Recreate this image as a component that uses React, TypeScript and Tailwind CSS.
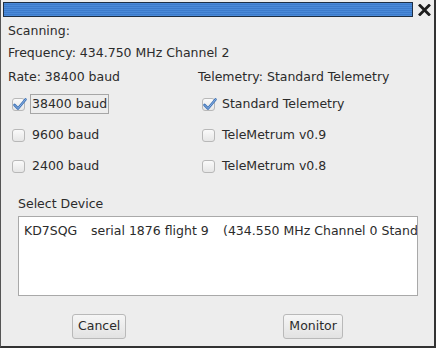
import React from "react";

const font = { fontFamily: '"DejaVu Sans", "Liberation Sans", sans-serif' };

function Check({ checked }: { checked?: boolean }) {
  return (
    <span className="relative w-[13px] h-[13px] shrink-0 rounded-[3px] border border-[#b8b8b8] bg-gradient-to-b from-[#fafafa] to-[#e6e6e6]">
      {checked && (
        <svg className="absolute -top-[2px] -left-[1px]" width="16" height="15" viewBox="0 0 16 15">
          <path d="M2.5 8 L6 11.5 L13.5 2.5" fill="none" stroke="#3f72b5" strokeWidth="2.6" strokeLinecap="round" strokeLinejoin="round" />
          <path d="M2.5 8 L6 11.5 L13.5 2.5" fill="none" stroke="#8db4e6" strokeWidth="1" strokeLinecap="round" strokeLinejoin="round" />
        </svg>
      )}
    </span>
  );
}

function Option({ label, checked, focused }: { label: string; checked?: boolean; focused?: boolean }) {
  return (
    <div className="flex items-center h-[20px] pl-[4px] gap-[5px]">
      <Check checked={checked} />
      <span className={`px-[1px] h-[20px] flex items-center border ${focused ? "border-[#a6a6a6]" : "border-transparent"}`}>
        {label}
      </span>
    </div>
  );
}

function Button({ label }: { label: string }) {
  return (
    <button className="h-[25px] px-[5px] rounded-[3px] border border-[#b9b9b9] bg-gradient-to-b from-[#f6f6f6] to-[#e2e2e2] text-[12.5px] text-[#2b2b2b]">
      {label}
    </button>
  );
}

export default function App() {
  return (
    <div
      className="w-[436px] h-[348px] bg-[#ededed] border-l border-l-[#555] border-r-2 border-r-[#333] border-b-2 border-b-[#333] text-[12.5px] text-[#2b2b2b] overflow-hidden"
      style={font}
    >
      <div className="flex items-center pt-[2px] pl-[2px] pr-[3px]">
        <div className="h-[15px] w-[412px] border border-[#1e2f44] bg-[repeating-linear-gradient(to_bottom,#4a8ad9_0px,#4a8ad9_1px,#3d7bcb_1px,#3d7bcb_2px)]" />
        <svg className="ml-[5px]" width="13" height="12" viewBox="0 0 13 12">
          <path d="M2 1.5 L11 10.5 M11 1.5 L2 10.5" stroke="#1c1c1c" strokeWidth="2.8" strokeLinecap="square" />
        </svg>
      </div>

      <div className="pl-[7px]">
        <div className="h-[20px] mt-[4px] flex items-center">Scanning:</div>
        <div className="h-[20px] mt-[2px] flex items-center">Frequency: 434.750 MHz Channel 2</div>

        <div className="grid grid-cols-[190px_1fr] mt-[4px]">
          <div>
            <div className="h-[20px] flex items-center">Rate: 38400 baud</div>
            <div className="mt-[7px] flex flex-col gap-[11px]">
              <Option label="38400 baud" checked focused />
              <Option label="9600 baud" />
              <Option label="2400 baud" />
            </div>
          </div>
          <div>
            <div className="h-[20px] flex items-center">Telemetry: Standard Telemetry</div>
            <div className="mt-[7px] flex flex-col gap-[11px]">
              <Option label="Standard Telemetry" checked />
              <Option label="TeleMetrum v0.9" />
              <Option label="TeleMetrum v0.8" />
            </div>
          </div>
        </div>

        <div className="pl-[10px]">
          <div className="h-[20px] mt-[18px] flex items-center">Select Device</div>
          <div className="mt-[2px] w-[400px] h-[80px] bg-white border border-[#a9a9a9] overflow-hidden">
            <div className="flex whitespace-nowrap h-[20px] items-center pl-[5px] mt-[4px]">
              <span className="w-[67px] shrink-0">KD7SQG</span>
              <span className="w-[132px] shrink-0">serial 1876 flight 9</span>
              <span>(434.550 MHz Channel 0 Stand</span>
            </div>
          </div>
        </div>

        <div className="flex mt-[18px]">
          <div className="ml-[64px]">
            <Button label="Cancel" />
          </div>
          <div className="ml-[157px]">
            <Button label="Monitor" />
          </div>
        </div>
      </div>
    </div>
  );
}
